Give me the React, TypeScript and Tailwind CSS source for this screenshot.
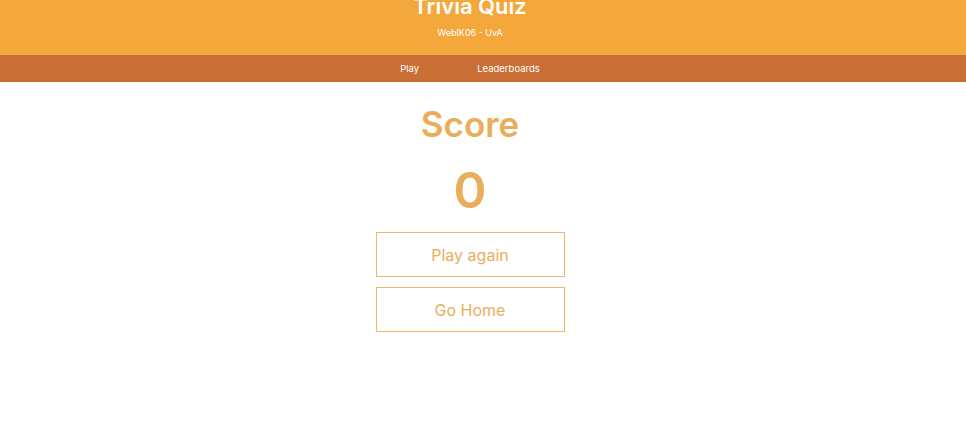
export default function App() {
  return (
    <div className="min-h-[428px] bg-white font-['Inter',sans-serif]">
      <header className="bg-[#f4a83c] h-[55px] overflow-hidden">
        <div className="w-[940px] flex flex-col items-center">
          <h1 className="mt-[-8px] text-[22px] font-semibold leading-[29px] text-white">Trivia Quiz</h1>
          <p className="mt-[6px] text-[9px] leading-[12px] text-white">WebIK06 - UvA</p>
        </div>
      </header>
      <nav className="bg-[#c96e35] h-[27px]">
        <div className="w-[940px] flex h-full items-center justify-center gap-[58px] pt-[1px] text-[9.5px] text-white">
          <a>Play</a>
          <a>Leaderboards</a>
        </div>
      </nav>
      <main className="w-[940px] flex flex-col items-center text-[#e8ae5c]">
        <h2 className="mt-[19px] text-[35px] font-semibold leading-[47px]">Score</h2>
        <p className="mt-[11px] text-[50px] font-semibold leading-[62px]">0</p>
        <button className="mt-[11px] w-[189px] h-[45px] border border-[#efb869] text-[16px] text-[#e8ae5c]">Play again</button>
        <button className="mt-[10px] w-[189px] h-[45px] border border-[#efb869] text-[16px] text-[#e8ae5c]">Go Home</button>
      </main>
    </div>
  );
}
